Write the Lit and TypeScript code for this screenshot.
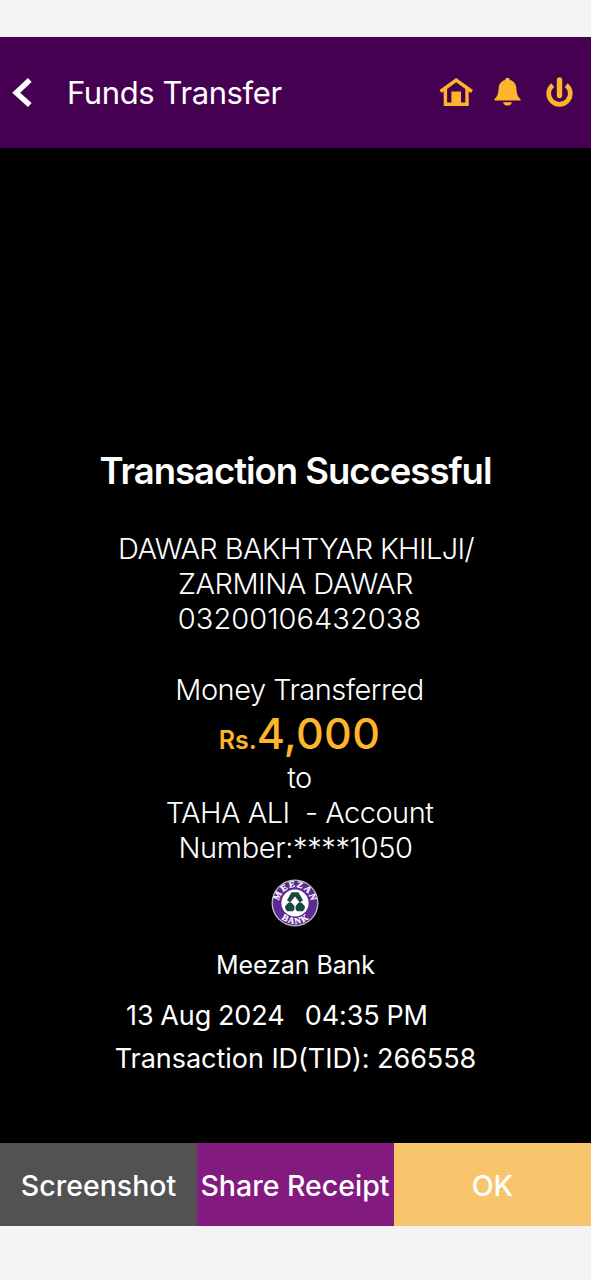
import { LitElement, html, css } from "lit";
import { customElement } from "lit/decorators.js";

@customElement("bank-seal")
class BankSeal extends LitElement {
  static styles = css`
    :host { display: block; width: 48px; height: 48px; }
    svg { display: block; width: 48px; height: 48px; }
    .word {
      font: 700 9px "Liberation Serif", serif; letter-spacing: 1.2px;
      fill: #fff; stroke: #fff; stroke-width: 0.25px;
    }
  `;
  render() {
    return html`<svg viewBox="0 0 48 48">
      <defs>
        <path id="top" d="M8.61 28A15.9 15.9 0 1 1 39.39 28" />
        <path id="bottom" d="M3.2 24A20.8 20.8 0 0 0 44.8 24" />
      </defs>
      <circle cx="24" cy="24" r="23.5" fill="#b9c4bd" />
      <circle cx="24" cy="24" r="22.2" fill="#5d2a93" />
      <circle cx="24" cy="24" r="13.6" fill="#fff" />
      <text class="word" text-anchor="middle"><textPath href="#top" startOffset="51%">MEEZAN</textPath></text>
      <text class="word" text-anchor="middle"><textPath href="#bottom" startOffset="51%">BANK</textPath></text>
      <path d="M20.6 13.2h6.800l4.600 8-3.200 2.400-4.800-6-4.800 6-3.200-2.400z" fill="#17493c" />
      <path d="M17.600 23.400h2.800l3 3.600v3.400l-1.500 1.800h-5.800l-1.900-2.800v-2.400zM30.400 23.400h-2.800l-3 3.600v3.400l1.500 1.800h5.800l1.900-2.800v-2.400z" fill="#17493c" />
    </svg>`;
  }
}

@customElement("top-bar")
class TopBar extends LitElement {
  static styles = css`
    :host {
      display: flex; align-items: center; height: 111px; box-sizing: border-box;
      padding: 0 14px 0 11px; background: #460052; color: #fff;
    }
    svg { display: block; }
    .title {
      flex: 1; margin: 1px 0 0 34px; font-weight: 400; font-size: 31px; line-height: 40px;
      letter-spacing: -0.4px; white-space: nowrap;
    }
    .actions { display: flex; gap: 17px; margin-top: -2px; }
  `;
  render() {
    return html`
      <svg width="22" height="32" viewBox="0 0 22 32"><path d="M18.8 3L5.200 15.700l13.600 12.400" fill="none" stroke="#fff" stroke-width="5.400" /></svg>
      <h1 class="title">Funds Transfer</h1>
      <div class="actions">
        <svg width="35" height="32" viewBox="0 0 35 32">
          <path d="M2.500 15.500L18.200 4.200l15.700 11.300" fill="none" stroke="#fdb52b" stroke-width="3.500" />
          <path d="M7.400 13v15.200h21.600V13" fill="none" stroke="#fdb52b" stroke-width="3.400" />
          <path d="M13.400 15.500h9.600V28h-9.600z" fill="#fdb52b" />
        </svg>
        <svg width="35" height="32" viewBox="0 0 35 32" fill="#fdb52b">
          <path d="M17.500 1.800c1.500 0 2.200.9 2.400 2.100 4.500 1.100 6.300 4.600 6.500 8.700.3 5.300 1.200 8.300 4 10.300.5.500.3 1.700-.6 1.700H5.200c-.9 0-1.100-1.200-.6-1.700 2.800-2 3.700-5 4-10.300.2-4.100 2-7.600 6.500-8.700.2-1.200.9-2.100 2.400-2.100z" />
          <path d="M13 26.200h9c-.6 2.200-2.300 3.400-4.500 3.400s-3.900-1.200-4.500-3.400z" />
        </svg>
        <svg width="35" height="32" viewBox="0 0 35 32" fill="none" stroke="#fdb52b">
          <path d="M10.800 9.100a10.800 10.800 0 1 0 13.400 0" stroke-width="4.700" />
          <path d="M17.500 4v15.500" stroke-width="5.400" stroke-linecap="round" />
        </svg>
      </div>`;
  }
}

@customElement("app-root")
class AppRoot extends LitElement {
  static styles = css`
    :host {
      display: flex; flex-direction: column; box-sizing: border-box; width: 591px; height: 1280px;
      padding: 37px 0 54px; background: #f3f3f3; color: #fff; overflow: hidden;
      font-family: Inter, "Liberation Sans", sans-serif;
    }
    .receipt {
      flex: 1; display: flex; flex-direction: column; align-items: center; background: #000;
      padding-top: 299px; box-sizing: border-box; white-space: pre;
    }
    .heading { margin: 0; font-size: 36.5px; line-height: 48px; font-weight: 600; letter-spacing: -1.02px; }
    .party, .transfer {
      display: flex; flex-direction: column; align-items: center;
      font-size: 29px; line-height: 35px; font-weight: 300; letter-spacing: -0.52px;
    }
    .party { margin-top: 36px; }
    .transfer { margin-top: 36px; }
    .name { padding-left: 1px; letter-spacing: -0.62px; }
    .account { padding-left: 8px; letter-spacing: 0.05px; }
    .lead { padding-left: 8px; }
    .masked { letter-spacing: -0.38px; }
    .amount {
      display: flex; align-items: baseline; color: #fdb52b; font-weight: 600; line-height: 53px;
      padding-left: 8px; margin-bottom: -7px; letter-spacing: 0;
    }
    .currency { font-size: 25px; }
    .value { font-size: 43px; font-weight: 550; letter-spacing: 0.3px; }
    .seal { margin: 14px 1px 0 0; }
    .bank { margin-top: 22px; font-size: 25px; line-height: 32px; letter-spacing: -0.1px; }
    .stamp { margin-top: 19px; padding-right: 37px; font-size: 27px; line-height: 32px; letter-spacing: -0.08px; word-spacing: -0.8px; }
    .tid { margin-top: 11px; font-size: 27px; line-height: 32px; letter-spacing: -0.04px; }
    .buttons { display: grid; grid-template-columns: 197px 197px 197px; height: 83px; }
    .button {
      border: 0; padding: 1px 0 0; margin: 0; font: 500 28.5px Inter, "Liberation Sans", sans-serif;
      color: #fff; white-space: nowrap;
    }
    .shot { background: #525252; }
    .share { background: #831a80; padding-right: 1px; }
    .ok { background: #f8c46c; }
  `;
  render() {
    return html`
      <top-bar></top-bar>
      <main class="receipt"><h2 class="heading">Transaction Successful</h2><div class="party">
          <span class="name">DAWAR BAKHTYAR KHILJI/</span>
          <span>ZARMINA DAWAR</span>
          <span class="account">03200106432038</span>
        </div>
        <div class="transfer">
          <span class="lead">Money Transferred</span>
          <div class="amount"><span class="currency">Rs.</span><span class="value">4,000</span></div>
          <span class="lead">to</span>
          <span class="lead">TAHA ALI  - Account</span>
          <span class="masked">Number:****1050</span>
        </div>
        <bank-seal class="seal"></bank-seal>
        <span class="bank">Meezan Bank</span>
        <span class="stamp">13 Aug 2024   04:35 PM</span>
        <span class="tid">Transaction ID(TID): 266558</span>
      </main>
      <div class="buttons">
        <button class="button shot">Screenshot</button>
        <button class="button share">Share Receipt</button>
        <button class="button ok">OK</button>
      </div>`;
  }
}
